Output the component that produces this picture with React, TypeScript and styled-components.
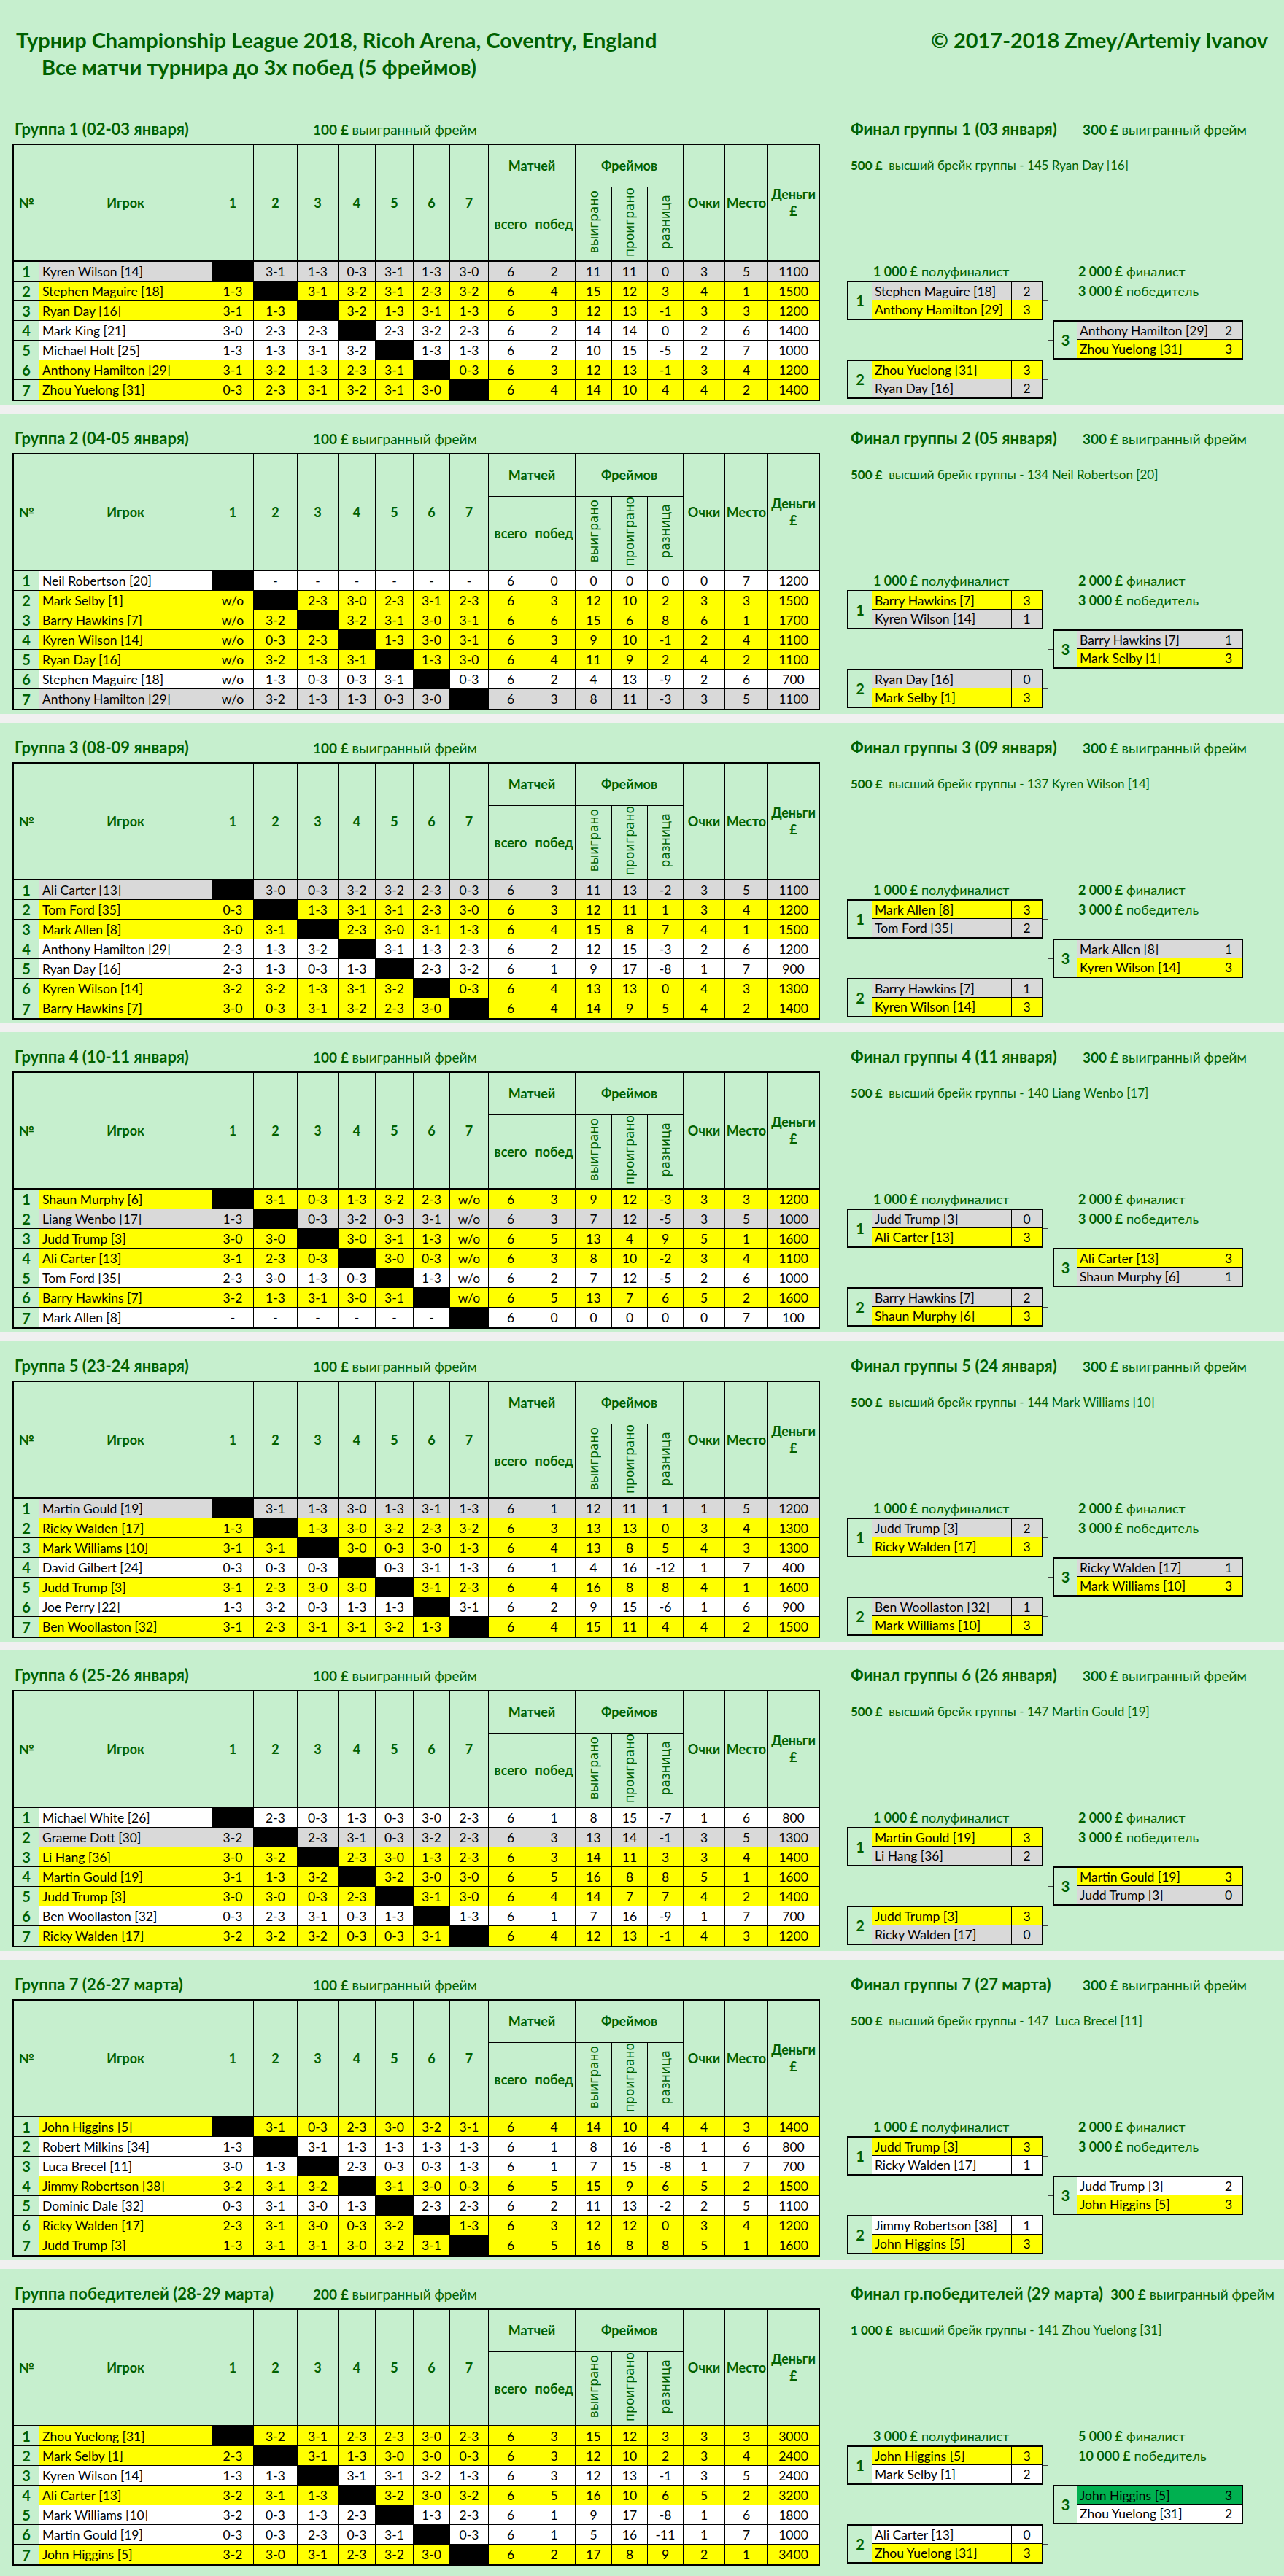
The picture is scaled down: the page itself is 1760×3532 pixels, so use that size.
import React from 'react';
import styled, {createGlobalStyle} from 'styled-components';

const GREEN_BG = '#c6efce';
const GREEN_TEXT = '#006100';

type Tone = 'y' | 'g' | 'w' | 'G';

const toneColors: Record<Tone, string> = {
    y: '#ffff00',
    g: '#d9d9d9',
    w: '#ffffff',
    G: '#00b050',
};

type Entry = [string, string, Tone];

type Group = {
    title: string;
    framePrize: string;
    finalTitle: string;
    finalPrize: string;
    breakPrize: string;
    breakText: string;
    prizes: [string, string, string];
    rows: string[];
    sf1: Entry[];
    final: Entry[];
    sf2: Entry[];
};

type Row = {
    name: string;
    scores: string[];
    stats: string[];
    tone: Tone;
};

// name | 7 results (x = own cell) | matches, wins, frames won, lost, diff, points, place, money | tone
const groups: Group[] = [
    {
        title: 'Группа 1 (02-03 января)',
        framePrize: '100 £',
        finalTitle: 'Финал группы 1 (03 января)',
        finalPrize: '300 £',
        breakPrize: '500 £',
        breakText: '145 Ryan Day [16]',
        prizes: ['1 000 £', '2 000 £', '3 000 £'],
        rows: [
            'Kyren Wilson [14]|x 3-1 1-3 0-3 3-1 1-3 3-0|6 2 11 11 0 3 5 1100|g',
            'Stephen Maguire [18]|1-3 x 3-1 3-2 3-1 2-3 3-2|6 4 15 12 3 4 1 1500|y',
            'Ryan Day [16]|3-1 1-3 x 3-2 1-3 3-1 1-3|6 3 12 13 -1 3 3 1200|y',
            'Mark King [21]|3-0 2-3 2-3 x 2-3 3-2 2-3|6 2 14 14 0 2 6 1400|w',
            'Michael Holt [25]|1-3 1-3 3-1 3-2 x 1-3 1-3|6 2 10 15 -5 2 7 1000|w',
            'Anthony Hamilton [29]|3-1 3-2 1-3 2-3 3-1 x 0-3|6 3 12 13 -1 3 4 1200|y',
            'Zhou Yuelong [31]|0-3 2-3 3-1 3-2 3-1 3-0 x|6 4 14 10 4 4 2 1400|y',
        ],
        sf1: [['Stephen Maguire [18]', '2', 'g'], ['Anthony Hamilton [29]', '3', 'y']],
        final: [['Anthony Hamilton [29]', '2', 'g'], ['Zhou Yuelong [31]', '3', 'y']],
        sf2: [['Zhou Yuelong [31]', '3', 'y'], ['Ryan Day [16]', '2', 'g']],
    },
    {
        title: 'Группа 2 (04-05 января)',
        framePrize: '100 £',
        finalTitle: 'Финал группы 2 (05 января)',
        finalPrize: '300 £',
        breakPrize: '500 £',
        breakText: '134 Neil Robertson [20]',
        prizes: ['1 000 £', '2 000 £', '3 000 £'],
        rows: [
            'Neil Robertson [20]|x - - - - - -|6 0 0 0 0 0 7 1200|w',
            'Mark Selby [1]|w/o x 2-3 3-0 2-3 3-1 2-3|6 3 12 10 2 3 3 1500|y',
            'Barry Hawkins [7]|w/o 3-2 x 3-2 3-1 3-0 3-1|6 6 15 6 8 6 1 1700|y',
            'Kyren Wilson [14]|w/o 0-3 2-3 x 1-3 3-0 3-1|6 3 9 10 -1 2 4 1100|y',
            'Ryan Day [16]|w/o 3-2 1-3 3-1 x 1-3 3-0|6 4 11 9 2 4 2 1100|y',
            'Stephen Maguire [18]|w/o 1-3 0-3 0-3 3-1 x 0-3|6 2 4 13 -9 2 6 700|w',
            'Anthony Hamilton [29]|w/o 3-2 1-3 1-3 0-3 3-0 x|6 3 8 11 -3 3 5 1100|g',
        ],
        sf1: [['Barry Hawkins [7]', '3', 'y'], ['Kyren Wilson [14]', '1', 'g']],
        final: [['Barry Hawkins [7]', '1', 'g'], ['Mark Selby [1]', '3', 'y']],
        sf2: [['Ryan Day [16]', '0', 'g'], ['Mark Selby [1]', '3', 'y']],
    },
    {
        title: 'Группа 3 (08-09 января)',
        framePrize: '100 £',
        finalTitle: 'Финал группы 3 (09 января)',
        finalPrize: '300 £',
        breakPrize: '500 £',
        breakText: '137 Kyren Wilson [14]',
        prizes: ['1 000 £', '2 000 £', '3 000 £'],
        rows: [
            'Ali Carter [13]|x 3-0 0-3 3-2 3-2 2-3 0-3|6 3 11 13 -2 3 5 1100|g',
            'Tom Ford [35]|0-3 x 1-3 3-1 3-1 2-3 3-0|6 3 12 11 1 3 4 1200|y',
            'Mark Allen [8]|3-0 3-1 x 2-3 3-0 3-1 1-3|6 4 15 8 7 4 1 1500|y',
            'Anthony Hamilton [29]|2-3 1-3 3-2 x 3-1 1-3 2-3|6 2 12 15 -3 2 6 1200|w',
            'Ryan Day [16]|2-3 1-3 0-3 1-3 x 2-3 3-2|6 1 9 17 -8 1 7 900|w',
            'Kyren Wilson [14]|3-2 3-2 1-3 3-1 3-2 x 0-3|6 4 13 13 0 4 3 1300|y',
            'Barry Hawkins [7]|3-0 0-3 3-1 3-2 2-3 3-0 x|6 4 14 9 5 4 2 1400|y',
        ],
        sf1: [['Mark Allen [8]', '3', 'y'], ['Tom Ford [35]', '2', 'g']],
        final: [['Mark Allen [8]', '1', 'g'], ['Kyren Wilson [14]', '3', 'y']],
        sf2: [['Barry Hawkins [7]', '1', 'g'], ['Kyren Wilson [14]', '3', 'y']],
    },
    {
        title: 'Группа 4 (10-11 января)',
        framePrize: '100 £',
        finalTitle: 'Финал группы 4 (11 января)',
        finalPrize: '300 £',
        breakPrize: '500 £',
        breakText: '140 Liang Wenbo [17]',
        prizes: ['1 000 £', '2 000 £', '3 000 £'],
        rows: [
            'Shaun Murphy [6]|x 3-1 0-3 1-3 3-2 2-3 w/o|6 3 9 12 -3 3 3 1200|y',
            'Liang Wenbo [17]|1-3 x 0-3 3-2 0-3 3-1 w/o|6 3 7 12 -5 3 5 1000|g',
            'Judd Trump [3]|3-0 3-0 x 3-0 3-1 1-3 w/o|6 5 13 4 9 5 1 1600|y',
            'Ali Carter [13]|3-1 2-3 0-3 x 3-0 0-3 w/o|6 3 8 10 -2 3 4 1100|y',
            'Tom Ford [35]|2-3 3-0 1-3 0-3 x 1-3 w/o|6 2 7 12 -5 2 6 1000|w',
            'Barry Hawkins [7]|3-2 1-3 3-1 3-0 3-1 x w/o|6 5 13 7 6 5 2 1600|y',
            'Mark Allen [8]|- - - - - - x|6 0 0 0 0 0 7 100|w',
        ],
        sf1: [['Judd Trump [3]', '0', 'g'], ['Ali Carter [13]', '3', 'y']],
        final: [['Ali Carter [13]', '3', 'y'], ['Shaun Murphy [6]', '1', 'g']],
        sf2: [['Barry Hawkins [7]', '2', 'g'], ['Shaun Murphy [6]', '3', 'y']],
    },
    {
        title: 'Группа 5 (23-24 января)',
        framePrize: '100 £',
        finalTitle: 'Финал группы 5 (24 января)',
        finalPrize: '300 £',
        breakPrize: '500 £',
        breakText: '144 Mark Williams [10]',
        prizes: ['1 000 £', '2 000 £', '3 000 £'],
        rows: [
            'Martin Gould [19]|x 3-1 1-3 3-0 1-3 3-1 1-3|6 1 12 11 1 1 5 1200|g',
            'Ricky Walden [17]|1-3 x 1-3 3-0 3-2 2-3 3-2|6 3 13 13 0 3 4 1300|y',
            'Mark Williams [10]|3-1 3-1 x 3-0 0-3 3-0 1-3|6 4 13 8 5 4 3 1300|y',
            'David Gilbert [24]|0-3 0-3 0-3 x 0-3 3-1 1-3|6 1 4 16 -12 1 7 400|w',
            'Judd Trump [3]|3-1 2-3 3-0 3-0 x 3-1 2-3|6 4 16 8 8 4 1 1600|y',
            'Joe Perry [22]|1-3 3-2 0-3 1-3 1-3 x 3-1|6 2 9 15 -6 1 6 900|w',
            'Ben Woollaston [32]|3-1 2-3 3-1 3-1 3-2 1-3 x|6 4 15 11 4 4 2 1500|y',
        ],
        sf1: [['Judd Trump [3]', '2', 'g'], ['Ricky Walden [17]', '3', 'y']],
        final: [['Ricky Walden [17]', '1', 'g'], ['Mark Williams [10]', '3', 'y']],
        sf2: [['Ben Woollaston [32]', '1', 'g'], ['Mark Williams [10]', '3', 'y']],
    },
    {
        title: 'Группа 6 (25-26 января)',
        framePrize: '100 £',
        finalTitle: 'Финал группы 6 (26 января)',
        finalPrize: '300 £',
        breakPrize: '500 £',
        breakText: '147 Martin Gould [19]',
        prizes: ['1 000 £', '2 000 £', '3 000 £'],
        rows: [
            'Michael White [26]|x 2-3 0-3 1-3 0-3 3-0 2-3|6 1 8 15 -7 1 6 800|w',
            'Graeme Dott [30]|3-2 x 2-3 3-1 0-3 3-2 2-3|6 3 13 14 -1 3 5 1300|g',
            'Li Hang [36]|3-0 3-2 x 2-3 3-0 1-3 2-3|6 3 14 11 3 3 4 1400|y',
            'Martin Gould [19]|3-1 1-3 3-2 x 3-2 3-0 3-0|6 5 16 8 8 5 1 1600|y',
            'Judd Trump [3]|3-0 3-0 0-3 2-3 x 3-1 3-0|6 4 14 7 7 4 2 1400|y',
            'Ben Woollaston [32]|0-3 2-3 3-1 0-3 1-3 x 1-3|6 1 7 16 -9 1 7 700|w',
            'Ricky Walden [17]|3-2 3-2 3-2 0-3 0-3 3-1 x|6 4 12 13 -1 4 3 1200|y',
        ],
        sf1: [['Martin Gould [19]', '3', 'y'], ['Li Hang [36]', '2', 'g']],
        final: [['Martin Gould [19]', '3', 'y'], ['Judd Trump [3]', '0', 'g']],
        sf2: [['Judd Trump [3]', '3', 'y'], ['Ricky Walden [17]', '0', 'g']],
    },
    {
        title: 'Группа 7 (26-27 марта)',
        framePrize: '100 £',
        finalTitle: 'Финал группы 7 (27 марта)',
        finalPrize: '300 £',
        breakPrize: '500 £',
        breakText: '147  Luca Brecel [11]',
        prizes: ['1 000 £', '2 000 £', '3 000 £'],
        rows: [
            'John Higgins [5]|x 3-1 0-3 2-3 3-0 3-2 3-1|6 4 14 10 4 4 3 1400|y',
            'Robert Milkins [34]|1-3 x 3-1 1-3 1-3 1-3 1-3|6 1 8 16 -8 1 6 800|w',
            'Luca Brecel [11]|3-0 1-3 x 2-3 0-3 0-3 1-3|6 1 7 15 -8 1 7 700|w',
            'Jimmy Robertson [38]|3-2 3-1 3-2 x 3-1 3-0 0-3|6 5 15 9 6 5 2 1500|y',
            'Dominic Dale [32]|0-3 3-1 3-0 1-3 x 2-3 2-3|6 2 11 13 -2 2 5 1100|w',
            'Ricky Walden [17]|2-3 3-1 3-0 0-3 3-2 x 1-3|6 3 12 12 0 3 4 1200|y',
            'Judd Trump [3]|1-3 3-1 3-1 3-0 3-2 3-1 x|6 5 16 8 8 5 1 1600|y',
        ],
        sf1: [['Judd Trump [3]', '3', 'y'], ['Ricky Walden [17]', '1', 'w']],
        final: [['Judd Trump [3]', '2', 'w'], ['John Higgins [5]', '3', 'y']],
        sf2: [['Jimmy Robertson [38]', '1', 'w'], ['John Higgins [5]', '3', 'y']],
    },
    {
        title: 'Группа победителей (28-29 марта)',
        framePrize: '200 £',
        finalTitle: 'Финал гр.победителей (29 марта)',
        finalPrize: '300 £',
        breakPrize: '1 000 £',
        breakText: '141 Zhou Yuelong [31]',
        prizes: ['3 000 £', '5 000 £', '10 000 £'],
        rows: [
            'Zhou Yuelong [31]|x 3-2 3-1 2-3 2-3 3-0 2-3|6 3 15 12 3 3 3 3000|y',
            'Mark Selby [1]|2-3 x 3-1 1-3 3-0 3-0 0-3|6 3 12 10 2 3 4 2400|y',
            'Kyren Wilson [14]|1-3 1-3 x 3-1 3-1 3-2 1-3|6 3 12 13 -1 3 5 2400|w',
            'Ali Carter [13]|3-2 3-1 1-3 x 3-2 3-0 3-2|6 5 16 10 6 5 2 3200|y',
            'Mark Williams [10]|3-2 0-3 1-3 2-3 x 1-3 2-3|6 1 9 17 -8 1 6 1800|w',
            'Martin Gould [19]|0-3 0-3 2-3 0-3 3-1 x 0-3|6 1 5 16 -11 1 7 1000|w',
            'John Higgins [5]|3-2 3-0 3-1 2-3 3-2 3-0 x|6 2 17 8 9 2 1 3400|y',
        ],
        sf1: [['John Higgins [5]', '3', 'y'], ['Mark Selby [1]', '2', 'w']],
        final: [['John Higgins [5]', '3', 'G'], ['Zhou Yuelong [31]', '2', 'w']],
        sf2: [['Ali Carter [13]', '0', 'w'], ['Zhou Yuelong [31]', '3', 'y']],
    },
];

const columnWidths = [35, 237, 57, 60, 56, 51, 52, 50, 53, 61, 58, 50, 49, 49, 57, 59, 69];

const parseRow = (line: string): Row => {
    const [name, scores, stats, tone] = line.split('|');
    return {
        name,
        scores: scores.split(' '),
        stats: stats.split(' '),
        tone: tone as Tone,
    };
};

const GlobalStyle = createGlobalStyle`
    html, body {
        margin: 0;
        padding: 0;
        background: ${GREEN_BG};
    }

    body {
        font-family: Lato, "Open Sans", sans-serif;
        color: #000;
    }
`;

const Page = styled.div`
    width: 1760px;
    min-height: 3532px;
    background: ${GREEN_BG};
`;

const Header = styled.header`
    height: 143px;
    box-sizing: border-box;
    padding: 36px 22px 0;
    color: ${GREEN_TEXT};
    font-weight: 700;
    font-size: 29px;
`;

const TitleRow = styled.div`
    display: flex;
    justify-content: space-between;
    line-height: 38px;
`;

const Subtitle = styled.div`
    line-height: 36px;
    padding-left: 35px;
`;

const GroupBlock = styled.section`
    height: 412px;
    box-sizing: border-box;
    display: grid;
    grid-template-columns: 1103px 543px;
    grid-template-rows: 24px auto;
    align-content: start;
    column-gap: 41px;
    row-gap: 10px;
    padding: 20px 0 0 17px;
`;

const HeadLine = styled.div<{ $indent: number }>`
    display: flex;
    align-items: baseline;
    height: 24px;
    padding-left: ${(props) => props.$indent}px;
    color: ${GREEN_TEXT};
    white-space: nowrap;
`;

const BlockTitle = styled.span<{ $width: number }>`
    flex-shrink: 0;
    min-width: ${(props) => props.$width}px;
    padding-right: 10px;
    font-size: 22px;
    font-weight: 700;
`;

const Prize = styled.span`
    flex-shrink: 0;
    font-size: 19px;

    b {
        font-weight: 700;
    }
`;

const Separator = styled.div`
    height: 12px;
    background: #f0f0f0;
`;

const Table = styled.table`
    width: 1103px;
    table-layout: fixed;
    border-collapse: separate;
    border-spacing: 0;
    border: 2px solid #000;
    font-size: 17.5px;

    tbody td:last-child,
    thead tr:first-child th:last-child {
        border-right: 0;
    }
`;

const Col = styled.col<{ $width: number }>`
    width: ${(props) => props.$width}px;
`;

const HeadRow = styled.tr<{ $height: number }>`
    height: ${(props) => props.$height}px;
`;

const HeadCell = styled.th<{ $span?: boolean }>`
    padding: 0;
    border-right: 1px solid #000;
    border-bottom: ${(props) => (props.$span ? '1px' : '2px')} solid #000;
    background: ${GREEN_BG};
    color: ${GREEN_TEXT};
    font-size: 18px;
    font-weight: 700;
    line-height: 23px;
    text-align: center;
    vertical-align: middle;
`;

const VerticalLabel = styled.span`
    display: inline-block;
    writing-mode: vertical-rl;
    transform: rotate(180deg);
    font-family: "DejaVu Sans", sans-serif;
    font-size: 17px;
    font-weight: 400;
    line-height: 20px;
`;

const BodyRow = styled.tr`
    height: 27px;

    &:last-child td {
        border-bottom: 0;
    }
`;

const NumCell = styled.td`
    padding: 0;
    border-right: 1px solid #000;
    border-bottom: 1px solid #000;
    background: ${GREEN_BG};
    color: ${GREEN_TEXT};
    font-size: 20px;
    font-weight: 700;
    text-align: center;
`;

const NameCell = styled.td<{ $tone: Tone }>`
    padding: 0 4px;
    border-right: 1px solid #000;
    border-bottom: 1px solid #000;
    background: ${(props) => toneColors[props.$tone]};
    white-space: nowrap;
    overflow: hidden;
`;

const ValueCell = styled.td<{ $tone: Tone; $blank?: boolean }>`
    padding: 0;
    border-right: 1px solid #000;
    border-bottom: 1px solid #000;
    background: ${(props) => (props.$blank ? '#000' : toneColors[props.$tone])};
    text-align: center;
    white-space: nowrap;
`;

const Bracket = styled.div`
    display: grid;
    grid-template-columns: 269px 13px 261px;
    grid-template-rows: 161px repeat(7, 27px);
    color: ${GREEN_TEXT};
`;

const BreakLine = styled.div`
    grid-column: 1 / -1;
    grid-row: 1;
    padding: 19px 0 0 5px;
    font-size: 17px;
    line-height: 22px;
    white-space: pre;

    b {
        font-weight: 700;
    }
`;

const PrizeLabel = styled.div<{ $col: number; $row: number; $indent: number }>`
    grid-column: ${(props) => props.$col};
    grid-row: ${(props) => props.$row};
    display: flex;
    align-items: center;
    padding-left: ${(props) => props.$indent}px;
    font-size: 18px;
    white-space: nowrap;

    b {
        font-weight: 700;
        margin-right: 5px;
    }
`;

const MatchBox = styled.div<{ $col: number; $row: number; $numWidth: number; $scoreWidth: number }>`
    grid-column: ${(props) => props.$col};
    grid-row: ${(props) => props.$row} / span 2;
    display: grid;
    grid-template-columns: ${(props) => props.$numWidth}px 1fr ${(props) => props.$scoreWidth}px;
    grid-template-rows: 1fr 1fr;
    border: 2px solid #000;
    background: ${GREEN_BG};
`;

const MatchNo = styled.div`
    grid-column: 1;
    grid-row: 1 / span 2;
    display: flex;
    align-items: center;
    justify-content: center;
    color: ${GREEN_TEXT};
    font-size: 20px;
    font-weight: 700;
`;

const MatchName = styled.div<{ $tone: Tone; $first: boolean }>`
    display: flex;
    align-items: center;
    min-width: 0;
    padding-left: 4px;
    background: ${(props) => toneColors[props.$tone]};
    border-bottom: ${(props) => (props.$first ? '1px solid #000' : 'none')};
    color: #000;
    font-size: 17.5px;
    white-space: nowrap;
`;

const MatchScore = styled(MatchName)`
    justify-content: center;
    padding-left: 0;
    border-left: 1px solid #000;
`;

const Connector = styled.svg`
    grid-column: 2;
    grid-row: 3 / span 6;
    width: 13px;
    height: 162px;
    overflow: visible;
`;

const GroupTable = ({rows}: { rows: Row[] }) => (
    <Table>
        <colgroup>
            {columnWidths.map((w, i) => <Col key={i} $width={w}/>)}
        </colgroup>
        <thead>
            <HeadRow $height={58}>
                <HeadCell rowSpan={2}>№</HeadCell>
                <HeadCell rowSpan={2}>Игрок</HeadCell>
                {[1, 2, 3, 4, 5, 6, 7].map((n) => <HeadCell key={n} rowSpan={2}>{n}</HeadCell>)}
                <HeadCell colSpan={2} $span>Матчей</HeadCell>
                <HeadCell colSpan={3} $span>Фреймов</HeadCell>
                <HeadCell rowSpan={2}>Очки</HeadCell>
                <HeadCell rowSpan={2}>Место</HeadCell>
                <HeadCell rowSpan={2}>Деньги<br/>£</HeadCell>
            </HeadRow>
            <HeadRow $height={101}>
                <HeadCell>всего</HeadCell>
                <HeadCell>побед</HeadCell>
                <HeadCell><VerticalLabel>выиграно</VerticalLabel></HeadCell>
                <HeadCell><VerticalLabel>проиграно</VerticalLabel></HeadCell>
                <HeadCell><VerticalLabel>разница</VerticalLabel></HeadCell>
            </HeadRow>
        </thead>
        <tbody>
            {rows.map((row, i) => (
                <BodyRow key={row.name + i}>
                    <NumCell>{i + 1}</NumCell>
                    <NameCell $tone={row.tone}>{row.name}</NameCell>
                    {row.scores.map((s, j) => (
                        <ValueCell key={'s' + j} $tone={row.tone} $blank={s === 'x'}>
                            {s === 'x' ? '' : s}
                        </ValueCell>
                    ))}
                    {row.stats.map((s, j) => (
                        <ValueCell key={'t' + j} $tone={row.tone}>{s}</ValueCell>
                    ))}
                </BodyRow>
            ))}
        </tbody>
    </Table>
);

type MatchProps = {
    no: number;
    entries: Entry[];
    col: number;
    row: number;
    numWidth: number;
    scoreWidth: number;
};

const Match = ({no, entries, col, row, numWidth, scoreWidth}: MatchProps) => (
    <MatchBox $col={col} $row={row} $numWidth={numWidth} $scoreWidth={scoreWidth}>
        <MatchNo>{no}</MatchNo>
        {entries.map(([name, score, tone], i) => (
            <React.Fragment key={name + i}>
                <MatchName $tone={tone} $first={i === 0}>{name}</MatchName>
                <MatchScore $tone={tone} $first={i === 0}>{score}</MatchScore>
            </React.Fragment>
        ))}
    </MatchBox>
);

const GroupBracket = ({group}: { group: Group }) => (
    <Bracket>
        <BreakLine>
            <b>{group.breakPrize}</b>
            {'  высший брейк группы - ' + group.breakText}
        </BreakLine>
        <PrizeLabel $col={1} $row={2} $indent={36}><b>{group.prizes[0]}</b>полуфиналист</PrizeLabel>
        <PrizeLabel $col={3} $row={2} $indent={35}><b>{group.prizes[1]}</b>финалист</PrizeLabel>
        <PrizeLabel $col={3} $row={3} $indent={35}><b>{group.prizes[2]}</b>победитель</PrizeLabel>
        <Match no={1} entries={group.sf1} col={1} row={3} numWidth={32} scoreWidth={42}/>
        <Match no={3} entries={group.final} col={3} row={5} numWidth={31} scoreWidth={37}/>
        <Match no={2} entries={group.sf2} col={1} row={7} numWidth={32} scoreWidth={42}/>
        <Connector viewBox="0 0 13 162">
            <path d="M0 27.5H6.5V135.5H0M6.5 81.5H13" fill="none" stroke="#404040" strokeWidth={1}/>
        </Connector>
    </Bracket>
);

const App = () => (
    <Page>
        <GlobalStyle/>
        <Header>
            <TitleRow>
                <span>Турнир Championship League 2018, Ricoh Arena, Coventry, England</span>
                <span>© 2017-2018 Zmey/Artemiy Ivanov</span>
            </TitleRow>
            <Subtitle>Все матчи турнира до 3х побед (5 фреймов)</Subtitle>
        </Header>

        {groups.map((group, i) => (
            <React.Fragment key={group.title}>
                <GroupBlock>
                    <HeadLine $indent={3}>
                        <BlockTitle $width={399}>{group.title}</BlockTitle>
                        <Prize><b>{group.framePrize}</b> выигранный фрейм</Prize>
                    </HeadLine>
                    <HeadLine $indent={5}>
                        <BlockTitle $width={308}>{group.finalTitle}</BlockTitle>
                        <Prize><b>{group.finalPrize}</b> выигранный фрейм</Prize>
                    </HeadLine>
                    <GroupTable rows={group.rows.map(parseRow)}/>
                    <GroupBracket group={group}/>
                </GroupBlock>
                {i < groups.length - 1 && <Separator/>}
            </React.Fragment>
        ))}
    </Page>
);

export default App;
